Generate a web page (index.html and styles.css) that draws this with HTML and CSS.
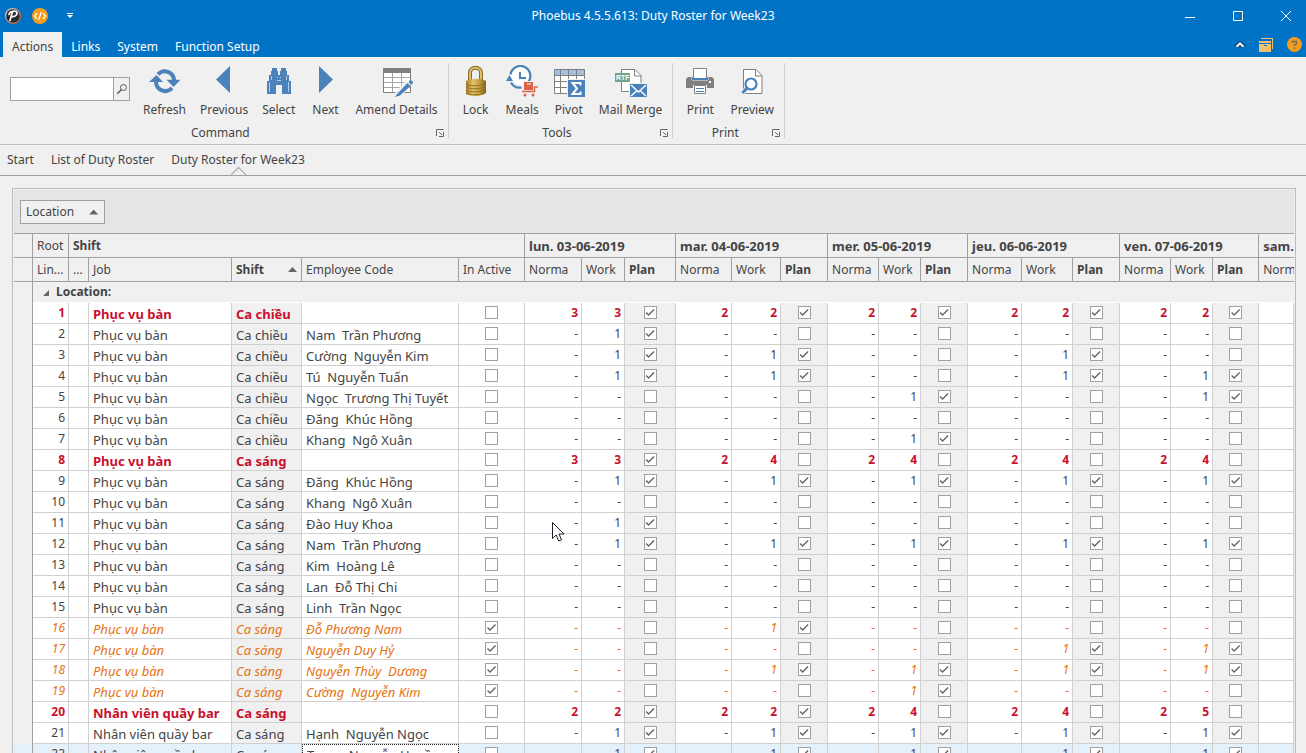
FILE: index.html
```
<!DOCTYPE html>
<html lang="en">
<head>
    <meta charset="UTF-8">
    <meta name="viewport" content="width=device-width, initial-scale=1.0">
    <title>Phoebus 4.5.5.613: Duty Roster for Week23</title>
    <link rel="stylesheet" href="styles.css">
</head>
<body>
    <header class="titlebar">
        <div class="quick">
            <svg class="app-logo" width="16" height="16" viewBox="0 0 16 16">
                <circle cx="8" cy="8" r="8" fill="#c8673a"/>
                <circle cx="7.5" cy="7.5" r="7.5" fill="#b9bcc0"/>
                <circle cx="8" cy="8" r="6.8" fill="#26282c"/>
                <path d="M7.5 3.5 5 12.5M4 6.5C4.500 3 11.500 2 12 5c.3 3-3.500 4-5.500 3.500" fill="none" stroke="#fff" stroke-width="1.700" stroke-linecap="round"/>
            </svg>
            <button class="icon-btn" aria-label="Code">
                <svg width="16" height="16" viewBox="0 0 16 16">
                    <circle cx="8" cy="8" r="8" fill="#f59c1a"/>
                    <path d="M5 5 2.500 8 5 11M11 5l2.500 3L11 11M9.200 4 6.800 12" fill="none" stroke="#fff" stroke-width="1.200"/>
                </svg>
            </button>
            <button class="icon-btn quick-more" aria-label="Customize">
                <svg width="6" height="6" viewBox="0 0 6 6"><path d="M0 0h6v1H0zM0 2h6L3 5z" fill="#fff"/></svg>
            </button>
        </div>
        <h1>Phoebus 4.5.5.613: Duty Roster for Week23</h1>
        <div class="window-buttons">
            <button aria-label="Minimize"><svg width="12" height="12" viewBox="0 0 12 12"><path d="M1 7.500h10" stroke="#fff"/></svg></button>
            <button aria-label="Maximize"><svg width="12" height="12" viewBox="0 0 12 12"><path d="M1.500 1.500h9v9h-9z" fill="none" stroke="#fff"/></svg></button>
            <button aria-label="Close"><svg width="12" height="12" viewBox="0 0 12 12"><path d="m1 1 10 10M11 1 1 11" stroke="#fff"/></svg></button>
        </div>
    </header>

    <nav class="ribbon-tabs">
        <a href="#" class="active">Actions</a>
        <a href="#">Links</a>
        <a href="#">System</a>
        <a href="#">Function Setup</a>
        <div class="ribbon-tools">
            <button class="icon-btn" aria-label="Collapse ribbon">
                <svg width="10" height="8" viewBox="0 0 10 8"><path d="m1 6 4-4 4 4" fill="none" stroke="#123e63" stroke-width="4"/><path d="M1.500 5.800 5 2.300l3.500 3.500" fill="none" stroke="#fff" stroke-width="2"/></svg>
            </button>
            <button class="icon-btn" aria-label="Windows">
                <svg width="14" height="14" viewBox="0 0 14 14" fill="#efc06e"><path d="M2 0h12v11h-1V1H2zM0 3h12v2H0zM0 6h12v8H0z"/><path d="M5 7.500h3" stroke="#0173c7"/></svg>
            </button>
            <button class="icon-btn" aria-label="Help">
                <svg width="15" height="15" viewBox="0 0 15 15"><circle cx="7.500" cy="7.500" r="7.500" fill="#f59c1a"/><path d="M5.500 6V4.500h4V7l-2 .8v1.400M7.500 10.500V12" fill="none" stroke="#6e6a55" stroke-width="1.300"/></svg>
            </button>
        </div>
    </nav>

    <section class="ribbon">
        <div class="group">
            <div class="tools">
                <form class="search">
                    <input type="text" aria-label="Search">
                    <button type="button" aria-label="Find">
                        <svg width="12" height="12" viewBox="0 0 12 12" fill="none" stroke="#555"><circle cx="7.500" cy="4.500" r="3"/><path d="m5.300 6.700-4 4" stroke-width="1.500"/></svg>
                    </button>
                </form>
                <button class="tool">
                    <svg width="32" height="32" viewBox="0 0 32 32" fill="#4c82bc">
                        <path d="M9 9.300A9.200 9.200 0 0 1 25 15M7 17a9.200 9.200 0 0 0 16 6" fill="none" stroke="#4c82bc" stroke-width="4"/>
                        <path d="M0 17 7.500 10 14 17zM17.500 14.700h14L24.500 22z"/>
                    </svg>
                    <span>Refresh</span>
                </button>
                <button class="tool">
                    <svg width="32" height="32" viewBox="0 0 32 32"><path d="M8 14.500 22 1v27z" fill="#4c82bc"/></svg>
                    <span>Previous</span>
                </button>
                <button class="tool">
                    <svg width="32" height="32" viewBox="0 0 32 32" fill="#4c82bc">
                        <path d="M9 3h5v3h1v4h2V6h1V3h5v3h1v4h2v6h2v13h-9v-9h-6v9H4V16h2v-6h2V6h1z"/>
                        <path d="M6.500 27V17M8.500 15v-4M25.500 27V17M23.500 15v-4M14 12.500h1M17 12.500h1M14 15.500h4" stroke="#cfdeed" stroke-width=".8"/>
                    </svg>
                    <span>Select</span>
                </button>
                <button class="tool">
                    <svg width="32" height="32" viewBox="0 0 32 32"><path d="M24 14.500 10 1v27z" fill="#4c82bc"/></svg>
                    <span>Next</span>
                </button>
                <button class="tool">
                    <svg width="32" height="32" viewBox="0 0 32 32">
                        <path d="M2.500 3.500h27v24h-27z" fill="#fff" stroke="#808080"/>
                        <path d="M2 3h28v5H2z" fill="#808080"/>
                        <path d="M3 12.500h26M3 17.500h26M3 22.500h26M11.500 8v19M20.500 8v19" stroke="#a6a6a6"/>
                        <path d="M16 31 28 17" stroke="#f0f0f0" stroke-width="7"/>
                        <path d="M16.500 28.500 26.500 18l3 3L19 30.500 14 32zM27.500 17l2-2.500 3 3-2.300 2.500z" fill="#4c82bc"/>
                    </svg>
                    <span>Amend Details</span>
                </button>
            </div>
            <div class="caption"><span>Command</span>
                <button class="icon-btn" aria-label="Command options"><svg width="8" height="8" viewBox="0 0 8 8" fill="none" stroke="#666"><path d="M.5 7V.5H7.500M3 3l3 3M7.500 3v4.500H3"/></svg></button>
            </div>
        </div>

        <div class="group">
            <div class="tools">
                <button class="tool">
                    <svg width="32" height="32" viewBox="0 0 32 32">
                        <defs>
                            <linearGradient id="brass"><stop offset="0" stop-color="#a67c28"/><stop offset=".35" stop-color="#e3c568"/><stop offset=".7" stop-color="#c39a3c"/><stop offset="1" stop-color="#806018"/></linearGradient>
                        </defs>
                        <path d="M10 17V8c0-7 11-7 11 0v9" fill="none" stroke="#8a6a24" stroke-width="4"/>
                        <path d="M10 17V8c0-7 11-7 11 0v9" fill="none" stroke="#dcc06c" stroke-width="2"/>
                        <path d="M6 16c6-3 14-3 20 0v12c-6 4-14 4-20 1z" fill="url(#brass)"/>
                        <path d="M6 19c6 3 14 2 20-1M6 22c6 3 14 2 20-1M6 25c6 3 14 2 20-1M6 28c6 3 14 2 20-1" fill="none" stroke="#8f6d22"/>
                    </svg>
                    <span>Lock</span>
                </button>
                <button class="tool">
                    <svg width="32" height="32" viewBox="0 0 32 32">
                        <path d="M4 15A10 10 0 1 1 17 21" fill="#fff"/>
                        <path d="M4.500 9.500A10 10 0 1 1 22 17.500M5 17.500A10 10 0 0 0 15.500 22.500" fill="none" stroke="#4c82bc" stroke-width="2.200"/>
                        <path d="M0 16h7L3.500 10z" fill="#4c82bc"/>
                        <path d="M14 7v6h6" fill="none" stroke="#4c82bc" stroke-width="2"/>
                        <path d="M17 16h11v9H17z" fill="#f0f0f0"/>
                        <path d="M18 17h9v8h-9z" fill="#dc6346"/>
                        <path d="M21 19h4" stroke="#fff"/>
                        <path d="M16 26.500h12.500V22H32" fill="none" stroke="#dc6346" stroke-width="1.500"/>
                        <circle cx="19" cy="30" r="1.500" fill="#dc6346"/><circle cx="27" cy="30" r="1.500" fill="#dc6346"/>
                    </svg>
                    <span>Meals</span>
                </button>
                <button class="tool">
                    <svg width="32" height="32" viewBox="0 0 32 32">
                        <path d="M1.500 4.500h30v24h-30z" fill="#fff" stroke="#808080"/>
                        <path d="M2 5h29v5H2z" fill="#a5bfdd"/>
                        <path d="M2 10.500h29M2 16.500h29M2 22.500h29M7.500 5v23M15.500 5v23M23.500 5v23" stroke="#808080"/>
                        <path d="M14 14h18v18H14z" fill="#f0f0f0"/><path d="M15 15h17v17H15z" fill="#4c82bc"/>
                        <path d="M27.500 20.500V18h-8l4.500 5.500-4.500 5.500h8v-2.500" fill="none" stroke="#fff" stroke-width="2"/>
                    </svg>
                    <span>Pivot</span>
                </button>
                <button class="tool">
                    <svg width="32" height="32" viewBox="0 0 32 32">
                        <path d="M6.500 4.500H20l6 6v16H6.500z" fill="#fff" stroke="#808080"/>
                        <path d="M19.500 4.500V11H26" fill="none" stroke="#808080"/>
                        <path d="M0 8h15v9H0z" fill="#6ea58c"/>
                        <text class="rtf" x="1" y="15">RTF</text>
                        <path d="M14 18h18v14H14z" fill="#f0f0f0"/><path d="M15 19h17v13H15z" fill="#4c82bc"/>
                        <path d="m16 20 7.500 7 7.500-7M16 31l6-5.500M31 31l-6-5.500" fill="none" stroke="#fff" stroke-width="1.400"/>
                    </svg>
                    <span>Mail Merge</span>
                </button>
            </div>
            <div class="caption"><span>Tools</span>
                <button class="icon-btn" aria-label="Tools options"><svg width="8" height="8" viewBox="0 0 8 8" fill="none" stroke="#666"><path d="M.5 7V.5H7.500M3 3l3 3M7.500 3v4.500H3"/></svg></button>
            </div>
        </div>

        <div class="group">
            <div class="tools">
                <button class="tool">
                    <svg width="32" height="32" viewBox="0 0 32 32">
                        <path d="M4 12h24l2 2v9H2v-9z" fill="#808080"/>
                        <path d="M9.500 3.500h13v10h-13z" fill="#fff" stroke="#808080"/>
                        <path d="M8 11v4h16v-4" fill="none" stroke="#f0f0f0"/>
                        <path d="M9 12v2h14v-2" fill="none" stroke="#4c82bc" stroke-width="2"/>
                        <path d="M9 20h14v9H9z" fill="#f0f0f0"/>
                        <path d="M10.500 20.500h11v8h-11z" fill="#fff" stroke="#808080"/>
                        <path d="M12 23.500h8M12 26.500h8" stroke="#4c82bc"/>
                        <path d="M25 17h2" stroke="#fff" stroke-width="2"/>
                    </svg>
                    <span>Print</span>
                </button>
                <button class="tool">
                    <svg width="32" height="32" viewBox="0 0 32 32">
                        <path d="M7.500 4.500H20l6 6v18H7.500z" fill="#fff" stroke="#808080"/>
                        <path d="M19.500 4.500V11H26" fill="none" stroke="#808080"/>
                        <path d="m11 23-5 6" stroke="#f0f0f0" stroke-width="5"/>
                        <circle cx="15" cy="19" r="5.500" fill="#fff" stroke="#4c82bc" stroke-width="2.200"/>
                        <path d="m11 23-4.500 5" stroke="#4c82bc" stroke-width="3"/>
                    </svg>
                    <span>Preview</span>
                </button>
            </div>
            <div class="caption"><span>Print</span>
                <button class="icon-btn" aria-label="Print options"><svg width="8" height="8" viewBox="0 0 8 8" fill="none" stroke="#666"><path d="M.5 7V.5H7.500M3 3l3 3M7.500 3v4.500H3"/></svg></button>
            </div>
        </div>
    </section>

    <nav class="pages">
        <a href="#">Start</a>
        <a href="#">List of Duty Roster</a>
        <a href="#" class="current">Duty Roster for Week23</a>
    </nav>

    <main class="grid">
        <div class="group-panel">
            <button class="group-by">Location <i class="sort-up"></i></button>
        </div>
        <table>
            <colgroup id="cols"></colgroup>
            <thead>
                <tr>
                    <th class="indicator"></th>
                    <th>Root</th>
                    <th class="bold" colspan="5">Shift</th>
                    <th class="day" colspan="3">lun. 03-06-2019</th>
                    <th class="day" colspan="3">mar. 04-06-2019</th>
                    <th class="day" colspan="3">mer. 05-06-2019</th>
                    <th class="day" colspan="3">jeu. 06-06-2019</th>
                    <th class="day" colspan="3">ven. 07-06-2019</th>
                    <th class="day">sam.</th>
                </tr>
                <tr>
                    <th class="indicator"></th>
                    <th>Lin...</th>
                    <th>...</th>
                    <th>Job</th>
                    <th class="bold"><div class="sorted">Shift <i class="sort-up"></i></div></th>
                    <th>Employee Code</th>
                    <th>In Active</th>
                    <th>Norma</th><th>Work</th><th class="bold">Plan</th>
                    <th>Norma</th><th>Work</th><th class="bold">Plan</th>
                    <th>Norma</th><th>Work</th><th class="bold">Plan</th>
                    <th>Norma</th><th>Work</th><th class="bold">Plan</th>
                    <th>Norma</th><th>Work</th><th class="bold">Plan</th>
                    <th>Norma</th>
                </tr>
            </thead>
            <tbody id="rows">
                <tr class="location">
                    <td class="indicator"></td>
                    <td colspan="22"><i class="expander"></i>Location:</td>
                </tr>
            </tbody>
        </table>
    </main>

    <svg class="pointer" width="13" height="20" viewBox="0 0 13 20"><path d="M.5.500v16l3.700-3.500 2.500 6 2.800-1.200L7 12h5z" fill="#fff" stroke="#1c1c2c"/></svg>

    <script src="script.js"></script>
</body>
</html>
```
FILE: styles.css
```
* {
    box-sizing: border-box;
}

body {
    display: flex;
    flex-direction: column;
    height: 100vh;
    margin: 0;
    overflow: hidden;
    background-color: #f0f0f0;
    color: #444;
    font-family: 'Noto Sans', 'Open Sans', sans-serif;
    font-size: 12px;
    line-height: 16px;
}

a {
    color: inherit;
    text-decoration: none;
}

button {
    padding: 0;
    border: none;
    background: none;
    color: inherit;
    font: inherit;
}

svg {
    display: block;
    flex-shrink: 0;
}

/* Title bar */
.titlebar {
    display: grid;
    grid-template-columns: 1fr auto 1fr;
    align-items: center;
    flex-shrink: 0;
    height: 32px;
    background-color: #0173c7;
    color: #fff;
}

.titlebar h1 {
    margin: 0;
    font-size: 12px;
    font-weight: normal;
}

.quick {
    display: flex;
    align-items: center;
    gap: 11px;
    padding-left: 5px;
}

.quick-more {
    margin-left: 8px;
}

.window-buttons {
    display: flex;
    justify-content: flex-end;
}

.window-buttons button {
    display: flex;
    justify-content: center;
    width: 48px;
}

.window-buttons button:last-child {
    width: 44px;
    padding-left: 4px;
}

/* Ribbon */
.ribbon-tabs {
    display: flex;
    flex-shrink: 0;
    gap: 1px;
    height: 25px;
    padding-left: 3px;
    background-color: #0173c7;
    color: #fff;
}

.ribbon-tabs a {
    padding: 7px 8px 0;
}

.ribbon-tabs a.active {
    padding: 7px 9px 0;
    background-color: #f0f0f0;
    color: #444;
}

.ribbon-tools {
    display: flex;
    align-items: center;
    gap: 14px;
    margin-left: auto;
    padding-right: 4px;
}

.ribbon {
    display: flex;
    flex-shrink: 0;
    height: 88px;
    padding: 6px 0;
    border-bottom: 1px solid #c0c0c0;
}

.group {
    display: flex;
    flex-direction: column;
    justify-content: space-between;
    padding: 0 4px 0 5px;
    border-right: 1px solid #d0d0d0;
}

.tools {
    display: flex;
    gap: 2px;
}

.tool {
    display: flex;
    flex-direction: column;
    align-items: center;
    padding: 2px 6px 0;
    gap: 5px;
}

.search {
    display: flex;
    width: 120px;
    height: 24px;
    margin: 14px 5px 0 5px;
    border: 1px solid #a0a0a0;
}

.search input {
    flex: 1;
    min-width: 0;
    padding: 0 4px;
    border: none;
    outline: none;
    background-color: #fff;
}

.search button {
    width: 16px;
    padding: 0 2px;
    border-left: 1px solid #a0a0a0;
}

.rtf {
    fill: #fff;
    font-family: 'Liberation Sans', sans-serif;
    font-size: 7px;
    font-weight: bold;
}

.caption {
    display: flex;
    align-items: center;
    height: 10px;
}

.caption span {
    flex: 1;
    text-align: center;
}

/* Open pages */
.pages {
    display: flex;
    flex-shrink: 0;
    gap: 17px;
    height: 31px;
    padding: 7px 7px 0;
    border-bottom: 1px solid #a0a0a0;
}

.pages .current {
    position: relative;
}

.pages .current::after {
    content: "";
    position: absolute;
    bottom: -5px;
    left: 50%;
    width: 10px;
    height: 10px;
    margin-left: -5px;
    border-top: 1px solid #a0a0a0;
    border-left: 1px solid #a0a0a0;
    background: linear-gradient(135deg, #f0f0f0 50%, transparent 50%);
    transform: rotate(45deg);
}

/* Roster grid */
.grid {
    flex: 1;
    min-height: 0;
    margin: 12px 10px 0 12px;
    padding: 1px 1px 0;
    overflow: hidden;
    border: 1px solid #bbb;
    border-bottom: none;
}

.group-panel {
    height: 44px;
    padding: 10px 6px;
    border-bottom: 1px solid #a0a0a0;
    background-color: #e5e5e5;
}

.group-by {
    display: flex;
    align-items: center;
    gap: 15px;
    height: 24px;
    padding: 0 6px 0 5px;
    border: 1px solid #a0a0a0;
    background-color: #f0f0f0;
}

.sort-up {
    width: 9px;
    height: 5px;
    background-color: #666;
    clip-path: polygon(50% 0, 100% 100%, 0 100%);
}

table {
    width: 100%;
    table-layout: fixed;
    border-collapse: separate;
    border-spacing: 0;
}

th {
    height: 24px;
    padding: 0 0 0 4px;
    overflow: hidden;
    border-right: 1px solid #a0a0a0;
    border-bottom: 1px solid #a0a0a0;
    font-weight: normal;
    text-align: left;
    white-space: nowrap;
}

th:last-child {
    border-right: none;
}

.bold {
    font-weight: bold;
}

.day {
    font-size: 13px;
    font-weight: bold;
}

.sorted {
    display: flex;
    align-items: center;
    justify-content: space-between;
    padding-right: 4px;
}

td {
    height: 21px;
    padding: 0 4px;
    overflow: hidden;
    border-right: 1px solid #d0d0d0;
    border-bottom: 1px solid #d0d0d0;
    background-color: #fff;
    line-height: 16px;
    white-space: pre;
}

td.indicator {
    padding: 0;
    border-right-color: #a0a0a0;
    border-bottom: none;
    background-color: #f0f0f0;
    text-align: center;
}

.location td:last-child {
    padding-left: 10px;
    border-right: none;
    border-bottom-color: #fff;
    background-color: #f0f0f0;
    font-weight: bold;
}

.expander {
    display: inline-block;
    width: 6px;
    height: 6px;
    margin-right: 7px;
    background-color: #666;
    clip-path: polygon(100% 0, 100% 100%, 0 100%);
}

td.text {
    padding-top: 1px;
    font-size: 13px;
}

.number {
    text-align: right;
}

td.number {
    padding: 0 3px;
}

td.shade {
    background-color: #f0f0f0;
}

td.check {
    padding: 3px 0 0;
    vertical-align: top;
}

.total td {
    color: #c8102e;
    font-weight: bold;
}

.inactive td {
    color: #e5720f;
    font-style: italic;
}

.selected td {
    background-color: #e4f1fa;
}

.selected td.focused {
    border: 1px dotted #222;
    background-color: #fff;
}

input[type="checkbox"] {
    appearance: none;
    display: block;
    width: 13px;
    height: 13px;
    margin: 0 auto;
    border: 1px solid #a0a0a0;
    background-color: #fff;
}

input[type="checkbox"]:checked::before {
    content: "";
    display: block;
    width: 11px;
    height: 11px;
    background-color: #666;
    clip-path: polygon(1px 6px, 2px 5px, 4px 7px, 9px 2px, 10px 3px, 4px 9px);
}

.pointer {
    position: fixed;
    top: 522px;
    left: 552px;
    pointer-events: none;
}
```
FILE: script.js
```
const columns = [19, 36, 20, 143, 70, 157, 66, 57, 43, 51, 56, 49, 47, 51, 42, 47, 54, 51, 47, 51, 42, 46, 0];

const waiter = "Phục vụ bàn";
const bar = "Nhân viên quầy bar";
const late = "Ca chiều";
const early = "Ca sáng";

// work holds one value per day, plan marks the ticked days
const roster = [
    { job: waiter, shift: late, norma: "32222", work: "32222", plan: "xxxxx" },
    { job: waiter, shift: late, name: "Nam  Trần Phương", work: "1----" },
    { job: waiter, shift: late, name: "Cường  Nguyễn Kim", work: "11-1-" },
    { job: waiter, shift: late, name: "Tú  Nguyễn Tuấn", work: "11-11" },
    { job: waiter, shift: late, name: "Ngọc  Trương Thị Tuyết", work: "--1-1" },
    { job: waiter, shift: late, name: "Đăng  Khúc Hồng", work: "-----" },
    { job: waiter, shift: late, name: "Khang  Ngô Xuân", work: "--1--" },
    { job: waiter, shift: early, norma: "32222", work: "34444", plan: "x----" },
    { job: waiter, shift: early, name: "Đăng  Khúc Hồng", work: "11111" },
    { job: waiter, shift: early, name: "Khang  Ngô Xuân", work: "-----" },
    { job: waiter, shift: early, name: "Đào Huy Khoa", work: "1----" },
    { job: waiter, shift: early, name: "Nam  Trần Phương", work: "11111" },
    { job: waiter, shift: early, name: "Kim  Hoàng Lê", work: "-----" },
    { job: waiter, shift: early, name: "Lan  Đỗ Thị Chi", work: "-----" },
    { job: waiter, shift: early, name: "Linh  Trần Ngọc", work: "-----" },
    { job: waiter, shift: early, name: "Đỗ Phương Nam", work: "-1---", inactive: true },
    { job: waiter, shift: early, name: "Nguyễn Duy Hỷ", work: "---11", inactive: true },
    { job: waiter, shift: early, name: "Nguyễn Thùy  Dương", work: "-1111", inactive: true },
    { job: waiter, shift: early, name: "Cường  Nguyễn Kim", work: "--1--", inactive: true },
    { job: bar, shift: early, norma: "22222", work: "22445", plan: "xx---" },
    { job: bar, shift: early, name: "Hạnh  Nguyễn Ngọc", work: "11111" },
    { job: bar, shift: early, name: "Trang  Nguyễn Huyền", work: "11111", selected: true },
];

const days = ["lun.", "mar.", "mer.", "jeu.", "ven."];

function tick(checked, label) {
    return `<input type="checkbox" aria-label="${label}"${checked ? " checked" : ""}>`;
}

function rowHtml(row, index) {
    const type = row.norma ? "total" : row.inactive ? "inactive" : row.selected ? "selected" : "";
    let html = `<tr class="${type}"><td class="indicator">${row.selected ? "›" : ""}</td>`;
    html += `<td class="number">${index + 1}</td><td></td>`;
    html += `<td class="text">${row.job}</td><td class="text shade">${row.shift}</td>`;
    html += `<td class="text${row.selected ? " focused" : ""}">${row.name || ""}</td>`;
    html += `<td class="check">${tick(row.inactive, "In Active")}</td>`;
    days.forEach((day, i) => {
        const planned = row.plan ? row.plan[i] === "x" : row.work[i] === "1";
        html += `<td class="number">${row.norma ? row.norma[i] : "-"}</td><td class="number">${row.work[i]}</td>`;
        html += `<td class="check shade">${tick(planned, "Plan " + day)}</td>`;
    });
    return html + "<td></td></tr>";
}

document.getElementById("cols").innerHTML = columns
    .map(width => width ? `<col style="width: ${width}px">` : "<col>")
    .join("");
document.getElementById("rows").insertAdjacentHTML("beforeend", roster.map(rowHtml).join(""));
```
